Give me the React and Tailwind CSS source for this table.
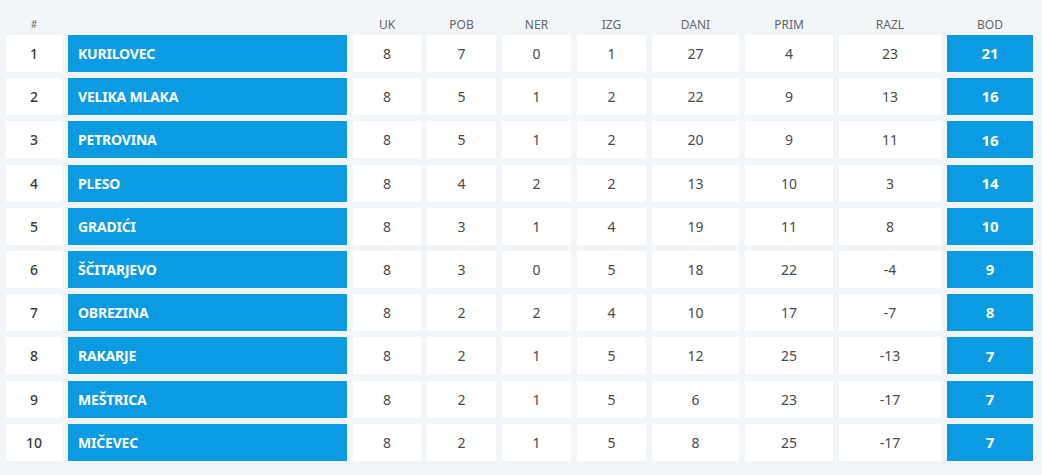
import React from "react";

const rows = [
  [1, "KURILOVEC", 8, 7, 0, 1, 27, 4, 23, 21],
  [2, "VELIKA MLAKA", 8, 5, 1, 2, 22, 9, 13, 16],
  [3, "PETROVINA", 8, 5, 1, 2, 20, 9, 11, 16],
  [4, "PLESO", 8, 4, 2, 2, 13, 10, 3, 14],
  [5, "GRADIĆI", 8, 3, 1, 4, 19, 11, 8, 10],
  [6, "ŠČITARJEVO", 8, 3, 0, 5, 18, 22, -4, 9],
  [7, "OBREZINA", 8, 2, 2, 4, 10, 17, -7, 8],
  [8, "RAKARJE", 8, 2, 1, 5, 12, 25, -13, 7],
  [9, "MEŠTRICA", 8, 2, 1, 5, 6, 23, -17, 7],
  [10, "MIČEVEC", 8, 2, 1, 5, 8, 25, -17, 7],
];

const cols =
  "grid grid-cols-[56px_279px_68px_69px_69px_69px_87px_88px_102px_86px] gap-x-[6px]";

const heads = ["UK", "POB", "NER", "IZG", "DANI", "PRIM", "RAZL", "BOD"];

export default function App() {
  return (
    <div
      className="w-[1042px] h-[475px] bg-[#f3f6f9] pl-[6px] pt-[17px]"
      style={{ fontFamily: '"Noto Sans", "Open Sans", sans-serif' }}
    >
      <div className={`${cols} text-[12px] leading-[15px] text-[#666] h-[18px]`}>
        <div className="text-center text-[10px]">#</div>
        <div></div>
        {heads.map((h) => (
          <div key={h} className="text-center">
            {h}
          </div>
        ))}
      </div>
      <div className={`${cols} gap-y-[6.2px]`}>
        {rows.map((r) => (
          <React.Fragment key={r[0]}>
            <div className="h-[37px] bg-white flex items-center justify-center text-[14px] font-medium text-[#3a3a3a]">
              {r[0]}
            </div>
            <div className="h-[37px] bg-[#0b9be2] flex items-center pl-[10px] text-[14px] font-bold text-white tracking-[-0.2px]">
              {r[1]}
            </div>
            {r.slice(2, 9).map((v, i) => (
              <div
                key={i}
                className="h-[37px] bg-white flex items-center justify-center text-[14px] text-[#4a4a4a]"
              >
                {v}
              </div>
            ))}
            <div className="h-[37px] bg-[#0b9be2] flex items-center justify-center text-[15px] font-bold text-white">
              {r[9]}
            </div>
          </React.Fragment>
        ))}
      </div>
    </div>
  );
}
